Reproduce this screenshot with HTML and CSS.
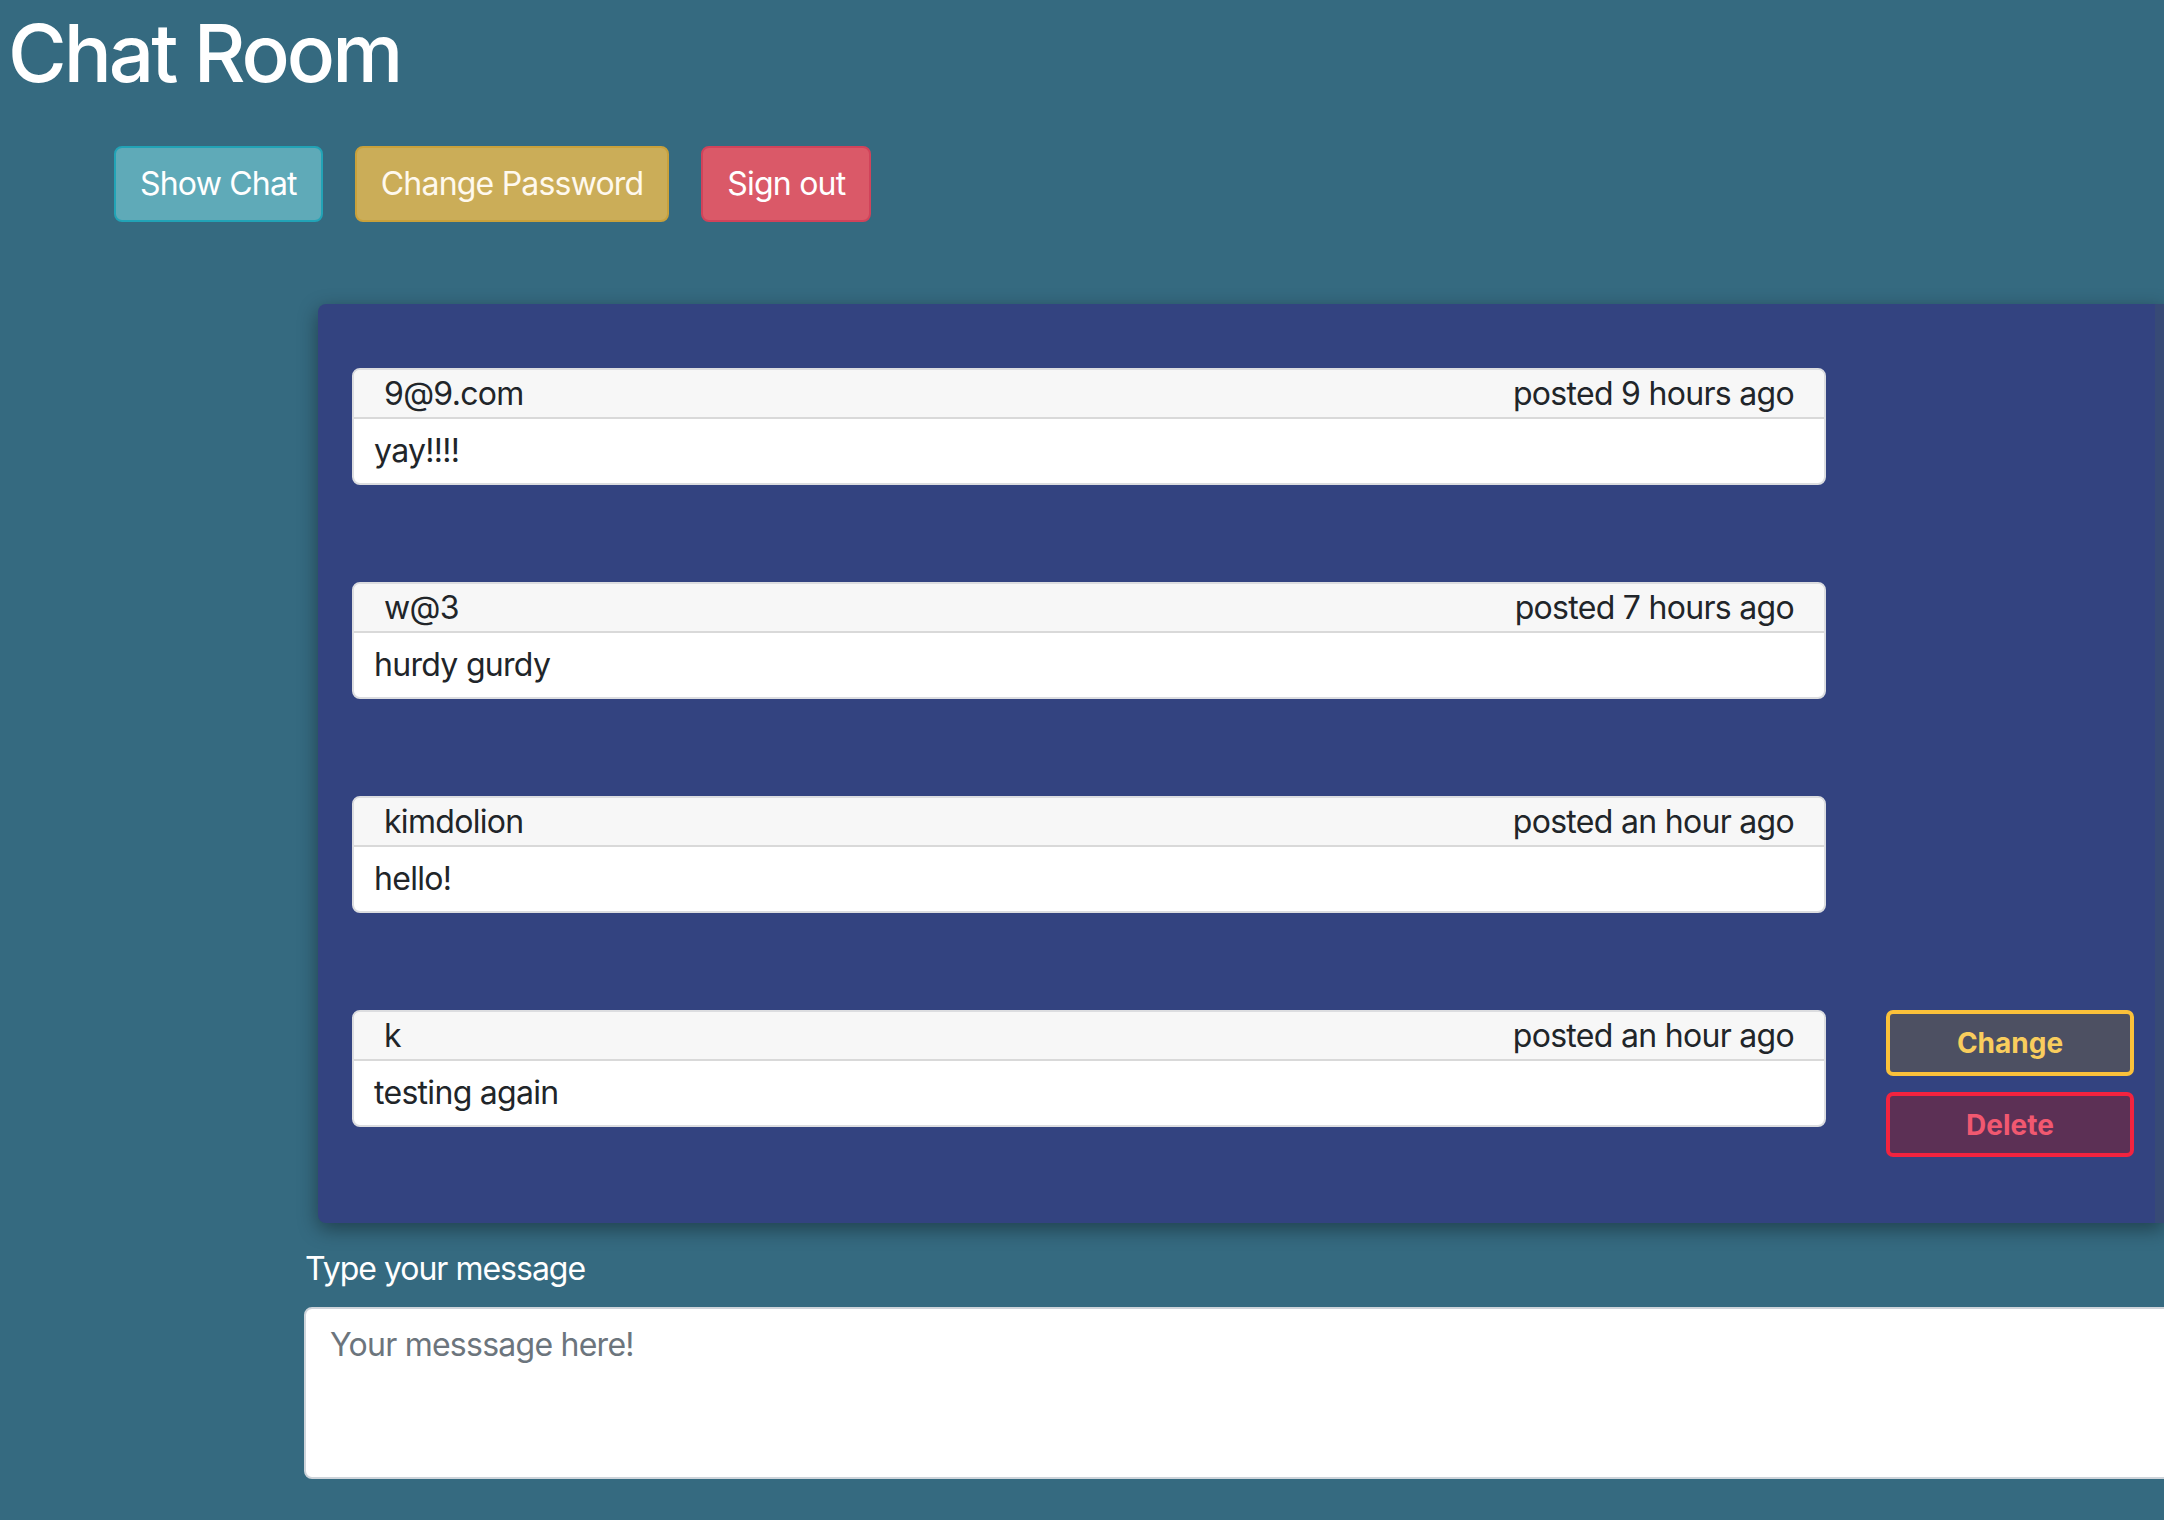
FILE: index.html
```html
<!DOCTYPE html>
<html lang="en">
<head>
<meta charset="utf-8">
<title>Chat Room</title>
<link rel="stylesheet" href="styles.css">
</head>
<body>
<div class="page">
  <h1 class="title">Chat Room</h1>
  <div class="nav-buttons">
    <button class="btn btn-info">Show Chat</button>
    <button class="btn btn-warning">Change Password</button>
    <button class="btn btn-danger">Sign out</button>
  </div>

  <div class="main">
    <section class="chat-panel">
      <div class="msg-row">
        <div class="card">
          <div class="card-header"><span>9@9.com</span><span>posted 9 hours ago</span></div>
          <div class="card-body">yay!!!!</div>
        </div>
      </div>
      <div class="msg-row">
        <div class="card">
          <div class="card-header"><span>w@3</span><span>posted 7 hours ago</span></div>
          <div class="card-body">hurdy gurdy</div>
        </div>
      </div>
      <div class="msg-row">
        <div class="card">
          <div class="card-header"><span>kimdolion</span><span>posted an hour ago</span></div>
          <div class="card-body">hello!</div>
        </div>
      </div>
      <div class="msg-row">
        <div class="card">
          <div class="card-header"><span>k</span><span>posted an hour ago</span></div>
          <div class="card-body">testing again</div>
        </div>
        <div class="msg-actions">
          <button class="act act-change">Change</button>
          <button class="act act-delete">Delete</button>
        </div>
      </div>
    </section>

    <label class="msg-label" for="msg">Type your message</label>
    <textarea id="msg" class="msg-input" rows="3" placeholder="Your messsage here!"></textarea>
  </div>
</div>
</body>
</html>
```

FILE: styles.css
```css
html, body {
  margin: 0;
  padding: 0;
}
body {
  background: #356a80;
  font-family: Inter, "Liberation Sans", sans-serif;
  color: #212529;
  overflow: hidden;
  width: 2164px;
  height: 1520px;
}
.page {
  padding: 5px 0 0 8px;
}
.title {
  margin: 0;
  font-size: 80px;
  line-height: 96px;
  font-weight: 500;
  color: #ffffff;
  letter-spacing: -3px;
}
.nav-buttons {
  display: flex;
  gap: 32px;
  margin: 45px 0 0 106px;
}
.btn {
  font-family: Inter, "Liberation Sans", sans-serif;
  font-size: 32px;
  line-height: 48px;
  padding: 12px 24px;
  border: 2px solid;
  border-radius: 8px;
  color: #ffffff;
  font-weight: 400;
  letter-spacing: -0.8px;
}
.btn-info {
  background: #5faab8;
  border-color: #22a3b6;
}
.btn-warning {
  background: #cbad58;
  border-color: #c9a13b;
  color: #fff9ee;
}
.btn-danger {
  background: #da5968;
  border-color: #d1435a;
}
.main {
  margin: 82px 0 0 296px;
  width: 1900px;
}
.chat-panel {
  margin-left: 14px;
  background: #334380;
  border-right: 9px solid #374a76;
  border-radius: 8px 0 0 8px;
  padding: 64px 21px 66px 34px;
  box-shadow: 0 6px 20px rgba(0, 0, 0, 0.4);
  display: flex;
  flex-direction: column;
  gap: 97px;
  box-sizing: border-box;
  width: 1846px;
}
.msg-row {
  display: grid;
  grid-template-columns: 1474px 248px;
  column-gap: 60px;
  align-items: start;
}
.card {
  background: #ffffff;
  border: 2px solid #dcdde0;
  border-radius: 8px;
  overflow: hidden;
  font-size: 32px;
  letter-spacing: -0.7px;
}
.card-header {
  display: flex;
  justify-content: space-between;
  background: #f7f7f7;
  border-bottom: 2px solid #d9d9d9;
  padding: 0 30px;
  line-height: 47px;
}
.card-body {
  padding: 8px 20px;
  line-height: 48px;
}
.msg-actions {
  display: flex;
  flex-direction: column;
  gap: 16px;
}
.act {
  font-family: Inter, "Liberation Sans", sans-serif;
  font-size: 28px;
  font-weight: 700;
  height: 66px;
  border: 4px solid;
  border-radius: 7px;
  padding: 0;
}
.act-change {
  background: #4d5062;
  border-color: #fbc13a;
  color: #f9cd5d;
}
.act-delete {
  height: 65px;
  background: #5c3055;
  border-color: #f2233f;
  color: #f15870;
}
.msg-label {
  display: block;
  margin: 22px 0 14px 1px;
  font-size: 32px;
  line-height: 48px;
  color: #ffffff;
  letter-spacing: -1px;
}
.msg-input {
  display: block;
  width: 1900px;
  box-sizing: border-box;
  height: 172px;
  padding: 12px 24px;
  font-family: Inter, "Liberation Sans", sans-serif;
  font-size: 32px;
  line-height: 48px;
  border: 2px solid #ced4da;
  border-radius: 8px;
  background: #ffffff;
  color: #495057;
  resize: none;
  letter-spacing: -0.75px;
}
.msg-input::placeholder {
  color: #6c757d;
  opacity: 1;
}
```
